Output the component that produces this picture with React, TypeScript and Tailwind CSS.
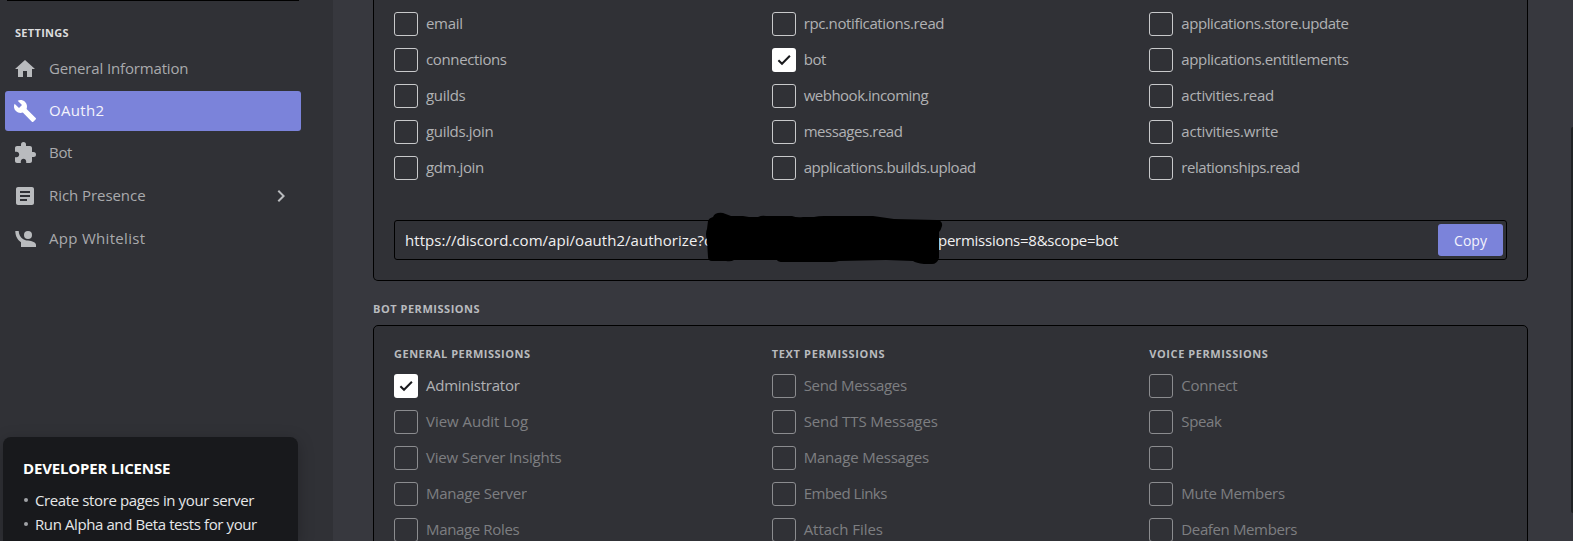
import React from 'react';
import { MdHome, MdBuild, MdExtension, MdArticle, MdChevronRight } from 'react-icons/md';

type Option = { label: string; checked?: boolean; dim?: boolean; tracking?: string };

const scopes: Option[][] = [
  [
    { label: 'email', tracking: 'tracking-[-0.3px]' },
    { label: 'connections', tracking: 'tracking-[-0.37px]' },
    { label: 'guilds', tracking: 'tracking-[-0.3px]' },
    { label: 'guilds.join', tracking: 'tracking-[-0.33px]' },
    { label: 'gdm.join', tracking: 'tracking-[-0.4px]' },
  ],
  [
    { label: 'rpc.notifications.read', tracking: 'tracking-[-0.37px]' },
    { label: 'bot', checked: true, tracking: 'tracking-[-0.4px]' },
    { label: 'webhook.incoming', tracking: 'tracking-[-0.5px]' },
    { label: 'messages.read', tracking: 'tracking-[-0.45px]' },
    { label: 'applications.builds.upload', tracking: 'tracking-[-0.42px]' },
  ],
  [
    { label: 'applications.store.update', tracking: 'tracking-[-0.43px]' },
    { label: 'applications.entitlements', tracking: 'tracking-[-0.37px]' },
    { label: 'activities.read', tracking: 'tracking-[-0.27px]' },
    { label: 'activities.write', tracking: 'tracking-[-0.19px]' },
    { label: 'relationships.read', tracking: 'tracking-[-0.45px]' },
  ],
];

const permissions: { title: string; tracking: string; options: Option[] }[] = [
  {
    title: 'GENERAL PERMISSIONS',
    tracking: 'tracking-[0.5px]',
    options: [
      { label: 'Administrator', checked: true, tracking: 'tracking-[-0.25px]' },
      { label: 'View Audit Log', dim: true, tracking: 'tracking-[-0.03px]' },
      { label: 'View Server Insights', dim: true, tracking: 'tracking-[-0.2px]' },
      { label: 'Manage Server', dim: true, tracking: 'tracking-[-0.3px]' },
      { label: 'Manage Roles', dim: true, tracking: 'tracking-[-0.35px]' },
    ],
  },
  {
    title: 'TEXT PERMISSIONS',
    tracking: 'tracking-[0.67px]',
    options: [
      { label: 'Send Messages', dim: true, tracking: 'tracking-[-0.31px]' },
      { label: 'Send TTS Messages', dim: true, tracking: 'tracking-[-0.1px]' },
      { label: 'Manage Messages', dim: true, tracking: 'tracking-[-0.19px]' },
      { label: 'Embed Links', dim: true, tracking: 'tracking-[-0.5px]' },
      { label: 'Attach Files', dim: true, tracking: 'tracking-[-0.03px]' },
    ],
  },
  {
    title: 'VOICE PERMISSIONS',
    tracking: 'tracking-[0.57px]',
    options: [
      { label: 'Connect', dim: true, tracking: 'tracking-[-0.25px]' },
      { label: 'Speak', dim: true, tracking: 'tracking-[-0.35px]' },
      { label: '', dim: true },
      { label: 'Mute Members', dim: true, tracking: 'tracking-[-0.3px]' },
      { label: 'Deafen Members', dim: true, tracking: 'tracking-[-0.37px]' },
    ],
  },
];

function WhitelistIcon() {
  return (
    <svg viewBox="0 0 24 24" className="size-6" fill="currentColor">
      <circle cx="15" cy="8" r="4" />
      <path d="M2.3 4h3.4c.1 3.600 1.700 6.600 4.600 8.200 1.500.9 3 1.200 4.700 1.400 4.200.3 8 2 8 4.400v2H8v-4.800C4.500 12.900 2.300 9 2.300 4z" />
    </svg>
  );
}

function CheckOption({ label, checked, dim, tracking }: Option) {
  return (
    <label className={dim ? 'flex h-6 items-center gap-2 opacity-60' : 'flex h-6 items-center gap-2'}>
      <span
        className={
          checked
            ? 'flex size-6 shrink-0 items-center justify-center rounded-[3px] bg-white text-[#18191c]'
            : 'size-6 shrink-0 rounded-[3px] border border-[#c8c9cb]'
        }
      >
        {checked && (
          <svg viewBox="0 0 18 18" className="size-[18px]" fill="none" stroke="currentColor" strokeWidth="2">
            <path d="M3.400 9.200L7 12.800L14.900 4.800" />
          </svg>
        )}
      </span>
      <span className={`whitespace-nowrap pb-0.5 text-[15px] leading-6 text-[#b0b1b4] ${tracking ?? ''}`}>{label}</span>
    </label>
  );
}

function NavItem({
  icon,
  label,
  tracking,
  active,
  arrow,
}: {
  icon: React.ReactNode;
  label: string;
  tracking: string;
  active?: boolean;
  arrow?: boolean;
}) {
  return (
    <a
      className={
        active
          ? 'flex h-10 items-center gap-3 rounded-[3px] bg-[#7b83da] px-2 text-white'
          : 'flex h-10 items-center gap-3 rounded-[3px] px-2 text-[#b9bbbe]'
      }
    >
      <span className="size-6 shrink-0">{icon}</span>
      <span
        className={`flex-1 pb-0.5 text-[15px] leading-5 ${tracking} ${active ? 'text-[#f4f4fc]' : 'text-[#a9aaad]'}`}
      >
        {label}
      </span>
      {arrow && <MdChevronRight className="size-6" />}
    </a>
  );
}

export default function App() {
  return (
    <div className="relative flex h-[541px] w-[1573px] overflow-hidden bg-[#37383e] font-['Open_Sans','Noto_Sans',sans-serif]">
      <aside className="flex w-[333px] shrink-0 flex-col bg-[#303136]">
        <div className="ml-[7px] h-px w-[292px] bg-black" />
        <h2 className="ml-[15px] mt-6 text-[11px] font-bold leading-4 tracking-[0.3px] text-[#dcddde]">SETTINGS</h2>
        <nav className="ml-[5px] mt-2 flex w-[296px] flex-col">
          <NavItem icon={<MdHome className="size-6" />} label="General Information" tracking="tracking-[-0.15px]" />
          <div className="mt-0.5">
            <NavItem icon={<MdBuild className="size-6" />} label="OAuth2" tracking="tracking-[0.3px]" active />
          </div>
          <div className="mt-0.5">
            <NavItem icon={<MdExtension className="size-6" />} label="Bot" tracking="tracking-[-0.3px]" />
          </div>
          <div className="mt-[3px]">
            <NavItem icon={<MdArticle className="size-6" />} label="Rich Presence" tracking="tracking-[-0.06px]" arrow />
          </div>
          <div className="mt-[3px]">
            <NavItem icon={<WhitelistIcon />} label="App Whitelist" tracking="tracking-[0.3px]" />
          </div>
        </nav>
        <section className="ml-[3px] mt-auto h-[104px] w-[295px] shrink-0 rounded-t-lg bg-[#18191c] px-5 pt-[19px] shadow-[0_4px_16px_rgba(0,0,0,0.25)]">
          <h3 className="text-[15px] font-bold leading-6 tracking-[-0.16px] text-white">DEVELOPER LICENSE</h3>
          <ul className="mt-2 text-[15px] leading-6 text-[#e6e7e8]">
            <li className="flex items-center gap-[7px] whitespace-nowrap tracking-[-0.38px]">
              <span className="ml-px size-1 rounded-full bg-[#a0a2a6]" />
              Create store pages in your server
            </li>
            <li className="flex items-center gap-[7px] whitespace-nowrap tracking-[-0.4px]">
              <span className="ml-px size-1 rounded-full bg-[#a0a2a6]" />
              Run Alpha and Beta tests for your
            </li>
          </ul>
        </section>
      </aside>

      <main className="ml-10 flex w-[1155px] flex-col">
        <section className="rounded-b-[5px] border border-t-0 border-black bg-[#303136] px-5 pb-5 pt-3">
          <div className="grid grid-cols-3 gap-x-5">
            {scopes.map((column, i) => (
              <div key={i} className="flex flex-col gap-3">
                {column.map((option) => (
                  <CheckOption key={option.label} {...option} />
                ))}
              </div>
            ))}
          </div>
          <div className="relative mt-10 flex h-10 items-center rounded-[3px] border border-black pl-2.5 pr-[3px]">
            <span className="w-[533px] shrink-0 whitespace-nowrap text-[15px] tracking-[0.04px] text-[#f0f0f1]">
              https://discord.com/api/oauth2/authorize?c
            </span>
            <span className="flex-1 whitespace-nowrap text-[15px] tracking-[-0.26px] text-[#f0f0f1]">
              permissions=8&amp;scope=bot
            </span>
            <button className="h-8 w-[65px] rounded-[3px] bg-[#7b83da] text-[14px] text-[#f4f4fc]">Copy</button>
            <svg viewBox="0 0 240 54" className="absolute -top-[10px] left-[311px] h-[54px] w-[240px]">
              <path
                d="M2 10Q3 7 7 6Q9 1 17 2L25 5H37L43 6L52 6Q56 4 60 5H86Q91 7 97 6H108Q112 5 118 5H167L188 8L231 9Q237 10 236 15Q235 19 233 21V47Q231 53 226 53H218Q210 52 207 50L180 49L133 50Q130 51 126 51H77Q72 51 71 49L28 49Q25 51 20 50H6Q2 50 2 46L1 30Q-1 22 1 18Z"
                fill="#000"
              />
            </svg>
          </div>
        </section>

        <h2 className="mt-5 text-[11px] font-bold leading-4 tracking-[0.53px] text-[#b9bbbe]">BOT PERMISSIONS</h2>

        <section className="mt-2 h-[240px] shrink-0 rounded-t-[5px] border border-black bg-[#303136] px-5 pt-5">
          <div className="grid grid-cols-3 gap-x-5">
            {permissions.map((group) => (
              <div key={group.title} className="flex flex-col">
                <h3 className={`text-[11px] font-bold leading-4 text-[#b9bbbe] ${group.tracking}`}>{group.title}</h3>
                <div className="mt-3 flex flex-col gap-3">
                  {group.options.map((option, i) => (
                    <CheckOption key={i} {...option} />
                  ))}
                </div>
              </div>
            ))}
          </div>
        </section>
      </main>
      <div className="absolute right-0 top-[127px] h-[386px] w-0.5 rounded-l bg-[#202225]" />
    </div>
  );
}
